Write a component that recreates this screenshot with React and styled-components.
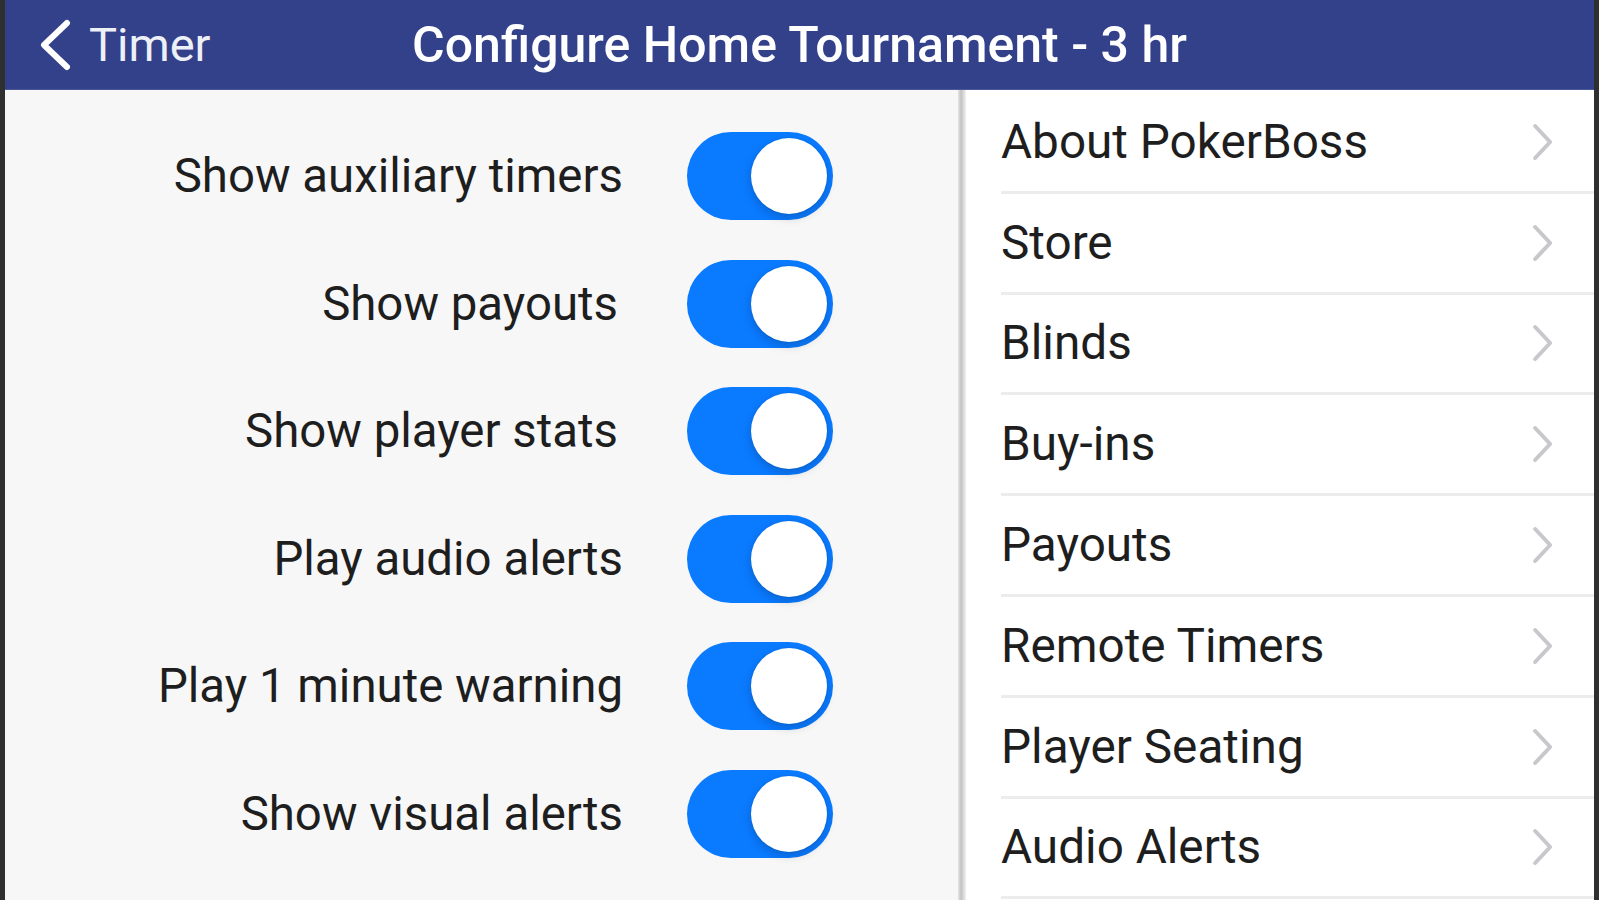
import React from "react";
import styled, { createGlobalStyle } from "styled-components";

const Global = createGlobalStyle`
  html, body { margin: 0; padding: 0; background: #2e2e2e; }
  body { font-family: Roboto, "Liberation Sans", Arial, sans-serif; -webkit-font-smoothing: antialiased; }
  * { box-sizing: border-box; }
`;

const Screen = styled.div`
  width: 1599px;
  height: 900px;
  display: flex;
  flex-direction: column;
  border-left: 5px solid #2f2f2f;
  border-right: 5px solid #2f2f2f;
  overflow: hidden;
  background: #f7f7f7;
`;

const NavBar = styled.header`
  height: 90px;
  flex: none;
  display: grid;
  grid-template-columns: 1fr auto 1fr;
  align-items: center;
  background: #33418a;
  color: #ffffff;
  border-bottom: 1px solid #4a5798;
`;

const BackButton = styled.div`
  display: flex;
  align-items: center;
  gap: 17px;
  padding-left: 31px;
  font-size: 47px;
  font-weight: 400;
  color: #eef0f8;
`;

const Title = styled.h1`
  margin: 0;
  font-size: 50px;
  font-weight: 500;
  color: #ffffff;
  letter-spacing: 0;
  white-space: nowrap;
`;

const Body = styled.div`
  flex: 1;
  display: flex;
  min-height: 0;
`;

const SwitchPanel = styled.section`
  width: 953px;
  flex: none;
  display: flex;
  flex-direction: column;
  gap: 39.5px;
  padding: 42px 125px 0 0;
  background: #f7f7f7;
`;

const Divider = styled.div`
  width: 8px;
  flex: none;
  background: linear-gradient(to right, #e4e4e4, #c2c2c2 40%, #d6d6d6 65%, #f2f2f2);
`;

const SwitchRow = styled.div`
  height: 88px;
  display: flex;
  justify-content: flex-end;
  align-items: center;
  gap: 64px;
`;

const Label = styled.span`
  font-size: 47.4px;
  color: #1e1e1e;
  white-space: nowrap;
  margin-right: ${(p) => p.$shift || 0}px;
`;

const Track = styled.div`
  position: relative;
  width: 146px;
  height: 88px;
  flex: none;
  border-radius: 44px;
  background: ${(p) => (p.$on ? "#0a7aff" : "#e5e5ea")};
`;

const Knob = styled.div`
  position: absolute;
  top: 6px;
  left: ${(p) => (p.$on ? "64px" : "6px")};
  width: 76px;
  height: 76px;
  border-radius: 50%;
  background: #ffffff;
  box-shadow: 0 4px 10px rgba(0, 0, 0, 0.18), 0 0 0 1px rgba(0, 0, 0, 0.04);
`;

const MenuPanel = styled.nav`
  flex: 1;
  display: flex;
  flex-direction: column;
  background: #ffffff;
  padding-left: 35px;
  padding-top: 3px;
`;

const MenuItem = styled.div`
  height: 100.8px;
  flex: none;
  display: flex;
  align-items: center;
  justify-content: space-between;
  padding-right: 41px;
  border-bottom: 3px solid #ececec;
  font-size: 47.7px;
  color: #1e1e1e;
`;

const Chevron = ({ size = 38, color = "#c7c7cc", width = 4 }) => (
  <svg width={size * 0.56} height={size} viewBox="0 0 21 38" fill="none">
    <polyline
      points="3,3 18,19 3,35"
      stroke={color}
      strokeWidth={width}
      strokeLinecap="round"
      strokeLinejoin="round"
    />
  </svg>
);

const BackChevron = () => (
  <svg width="36" height="52" viewBox="0 0 36 52" fill="none">
    <polyline
      points="31,4 8,26 31,48"
      stroke="#ffffff"
      strokeWidth="6"
      strokeLinecap="round"
      strokeLinejoin="round"
    />
  </svg>
);

const switches = [
  { label: "Show auxiliary timers", shift: 0 },
  { label: "Show payouts", shift: 5 },
  { label: "Show player stats", shift: 5 },
  { label: "Play audio alerts", shift: 0 },
  { label: "Play 1 minute warning", shift: 0 },
  { label: "Show visual alerts", shift: 0 },
];

const menu = [
  "About PokerBoss",
  "Store",
  "Blinds",
  "Buy-ins",
  "Payouts",
  "Remote Timers",
  "Player Seating",
  "Audio Alerts",
];

export default function App() {
  return (
    <>
      <Global />
      <Screen>
        <NavBar>
          <BackButton>
            <BackChevron />
            <span>Timer</span>
          </BackButton>
          <Title>Configure Home Tournament - 3 hr</Title>
          <div />
        </NavBar>
        <Body>
          <SwitchPanel>
            {switches.map((s) => (
              <SwitchRow key={s.label}>
                <Label $shift={s.shift}>{s.label}</Label>
                <Track $on>
                  <Knob $on />
                </Track>
              </SwitchRow>
            ))}
          </SwitchPanel>
          <Divider />
          <MenuPanel>
            {menu.map((m) => (
              <MenuItem key={m}>
                <span>{m}</span>
                <Chevron />
              </MenuItem>
            ))}
          </MenuPanel>
        </Body>
      </Screen>
    </>
  );
}
